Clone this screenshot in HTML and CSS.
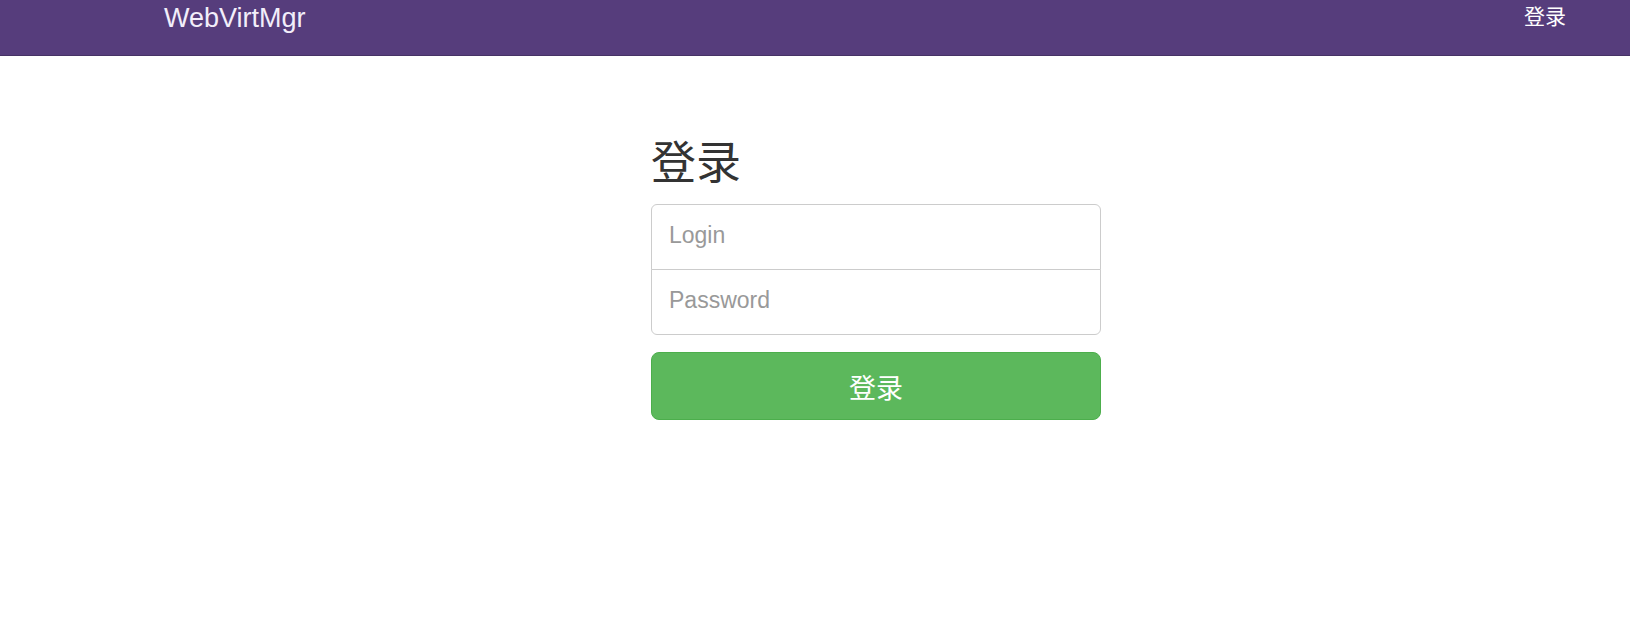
FILE: index.html
```html
<!DOCTYPE html>
<html lang="zh-CN">
<head>
<meta charset="utf-8">
<title>WebVirtMgr</title>
<link rel="stylesheet" href="styles.css">
</head>
<body>
<header class="navbar">
  <a class="brand" href="#">WebVirtMgr</a>
  <a class="nav-login" href="#">登录</a>
</header>
<main class="main">
  <form class="signin">
    <h2 class="signin-title">登录</h2>
    <div class="field-group">
      <input class="field field-top" type="text" placeholder="Login">
      <input class="field field-bottom" type="password" placeholder="Password">
    </div>
    <button class="btn-submit" type="button">登录</button>
  </form>
</main>
</body>
</html>
```

FILE: styles.css
```css
* { box-sizing: border-box; }
html, body { margin: 0; padding: 0; background: #fff; }
body {
  font-family: "Liberation Sans", Arial, "Noto Sans CJK SC", sans-serif;
  color: #333;
}
.navbar {
  height: 56px;
  background: #563d7c;
  border-bottom: 1px solid #463265;
  display: flex;
  justify-content: space-between;
  align-items: flex-start;
  padding: 0 64px 0 164px;
}
.brand {
  font-family: "Liberation Sans", Arial, sans-serif;
  font-size: 27px;
  line-height: 30px;
  padding-top: 3px;
  color: #f2eefa;
  text-decoration: none;
}
.nav-login {
  font-family: "Noto Sans CJK SC", sans-serif;
  font-size: 21px;
  line-height: 1;
  padding-top: 5px;
  color: #fff;
  text-decoration: none;
}
.main {
  display: flex;
  padding-left: 651px;
}
.signin {
  width: 450px;
  display: flex;
  flex-direction: column;
}
.signin-title {
  font-family: "Noto Sans CJK SC", sans-serif;
  font-weight: 400;
  font-size: 45px;
  line-height: 1;
  margin: 81px 0 22px 0;
  color: #333;
}
.field-group {
  display: flex;
  flex-direction: column;
}
.field {
  font-family: "Liberation Sans", Arial, sans-serif;
  font-size: 23px;
  height: 66px;
  padding: 14px 17px 18px 17px;
  border: 1px solid #ccc;
  color: #555;
  background: #fff;
  outline: none;
}
.field::placeholder { color: #999; }
.field-top { border-radius: 6px 6px 0 0; }
.field-bottom { border-radius: 0 0 6px 6px; margin-top: -1px; }
.btn-submit {
  margin-top: 17px;
  height: 68px;
  background: #5cb85c;
  border: 1px solid #4cae4c;
  border-radius: 8px;
  color: #fff;
  font-family: "Noto Sans CJK SC", sans-serif;
  font-size: 27px;
  line-height: 1;
  padding: 0;
}
```
